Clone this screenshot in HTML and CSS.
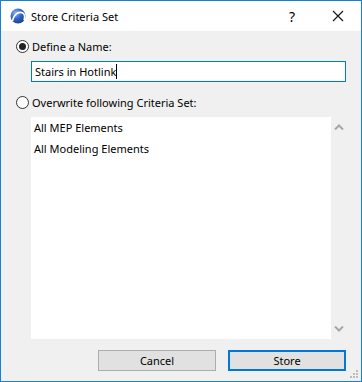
FILE: index.html
```html
<!DOCTYPE html>
<html lang="en">
<head>
  <meta charset="UTF-8">
  <title>Store Criteria Set</title>
  <link rel="stylesheet" href="styles.css">
</head>
<body>

<div class="window">
  <div class="titlebar">
    <svg class="app-icon" width="16" height="16" viewBox="0 0 16 16">
      <defs>
        <radialGradient id="ball" cx="0.35" cy="0.3" r="0.8">
          <stop offset="0" stop-color="#8fb4f0"/>
          <stop offset="0.5" stop-color="#2f62c8"/>
          <stop offset="1" stop-color="#1a3b8a"/>
        </radialGradient>
      </defs>
      <circle cx="8" cy="8" r="7.5" fill="url(#ball)"/>
      <path d="M2.5 13 C4 6 9 2.5 13.5 5.5 C14.8 7 14.8 9.5 14 12" fill="none" stroke="#fff" stroke-width="1.6"/>
    </svg>
    <span class="title">Store Criteria Set</span>
    <span class="title-btn help">?</span>
    <span class="title-btn close">
      <svg width="12" height="12" viewBox="0 0 12 12">
        <path d="M1 1 L11 11 M11 1 L1 11" stroke="#111" stroke-width="1.1"/>
      </svg>
    </span>
  </div>

  <div class="content">
    <label class="radio-row">
      <span class="radio checked"></span>
      <span>Define a Name:</span>
    </label>
    <div class="name-input">Stairs in Hotlink<span class="caret"></span></div>

    <label class="radio-row second">
      <span class="radio"></span>
      <span>Overwrite following Criteria Set:</span>
    </label>
    <div class="list-box">
      <ul class="list">
        <li>All MEP Elements</li>
        <li>All Modeling Elements</li>
      </ul>
      <div class="scrollbar">
        <svg width="10" height="6" viewBox="0 0 10 6"><path d="M1 5.5 L5 1.5 L9 5.5" fill="none" stroke="#a6a6a6" stroke-width="2"/></svg>
        <svg width="10" height="6" viewBox="0 0 10 6"><path d="M1 0.5 L5 4.5 L9 0.5" fill="none" stroke="#a6a6a6" stroke-width="2"/></svg>
      </div>
    </div>

    <div class="buttons">
      <button class="btn">Cancel</button>
      <button class="btn primary">Store</button>
    </div>
  </div>

  <svg class="grip" width="8" height="8" viewBox="0 0 8 8">
    <rect x="6" y="0" width="2" height="2" fill="#bcbcbc"/>
    <rect x="3" y="3" width="2" height="2" fill="#bcbcbc"/>
    <rect x="6" y="3" width="2" height="2" fill="#bcbcbc"/>
    <rect x="0" y="6" width="2" height="2" fill="#bcbcbc"/>
    <rect x="3" y="6" width="2" height="2" fill="#bcbcbc"/>
    <rect x="6" y="6" width="2" height="2" fill="#bcbcbc"/>
  </svg>
</div>

</body>
</html>
```

FILE: styles.css
```css
* {
  margin: 0;
  padding: 0;
  box-sizing: border-box;
  font-family: 'Noto Sans', sans-serif;
}

body {
  width: 362px;
  height: 382px;
  overflow: hidden;
  font-size: 11px;
  color: #000;
}

.window {
  position: relative;
  width: 362px;
  height: 382px;
  border: 1px solid #1c7fd6;
  display: flex;
  flex-direction: column;
  background: #f0f0f0;
}

.titlebar {
  height: 30px;
  background: #fff;
  display: flex;
  align-items: center;
  padding-left: 9px;
}

.app-icon {
  margin-right: 5px;
}

.title {
  flex: 1;
  font-size: 11px;
}

.title-btn {
  display: flex;
  align-items: center;
  justify-content: center;
  height: 30px;
}

.help {
  width: 46px;
  font-size: 14px;
}

.close {
  width: 46px;
}

.content {
  flex: 1;
  padding: 9px 15px 0 15px;
  display: flex;
  flex-direction: column;
}

.radio-row {
  display: flex;
  align-items: center;
  gap: 3px;
  height: 13px;
}

.radio-row.second {
  margin-top: 14px;
}

.radio {
  width: 13px;
  height: 13px;
  border: 1px solid #333;
  border-radius: 50%;
  background: #fff;
  display: flex;
  align-items: center;
  justify-content: center;
}

.radio.checked::after {
  content: "";
  width: 7px;
  height: 7px;
  border-radius: 50%;
  background: #222;
}

.name-input {
  margin: 8px 0 0 15px;
  height: 21px;
  border: 1px solid #0078d7;
  background: #fff;
  padding-left: 3px;
  display: flex;
  align-items: center;
}

.caret {
  display: inline-block;
  width: 1px;
  height: 15px;
  background: #000;
}

.list-box {
  margin: 8px 0 0 15px;
  height: 222px;
  display: flex;
}

.list {
  flex: 1;
  list-style: none;
  background: #fff;
  padding: 0 3px;
}

.list li {
  height: 21px;
  line-height: 21px;
}

.scrollbar {
  width: 15px;
  display: flex;
  flex-direction: column;
  justify-content: space-between;
  align-items: center;
  padding: 7px 0 7px;
}

.buttons {
  display: flex;
  justify-content: flex-end;
  gap: 12px;
  margin-top: 11px;
}

.btn {
  width: 118px;
  height: 21px;
  background: #e1e1e1;
  border: 1px solid #adadad;
  font-size: 11px;
  color: #000;
}

.btn.primary {
  border: 2px solid #0078d7;
}

.grip {
  position: absolute;
  right: 3px;
  bottom: 3px;
}
```
